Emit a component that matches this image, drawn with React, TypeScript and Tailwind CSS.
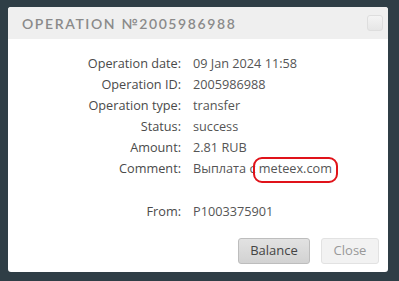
import React from 'react';

const rows = [
  { label: 'Operation date:', value: '09 Jan 2024 11:58' },
  { label: 'Operation ID:', value: '2005986988' },
  { label: 'Operation type:', value: 'transfer' },
  { label: 'Status:', value: 'success' },
  { label: 'Amount:', value: '2.81 RUB' },
];

export default function App() {
  return (
    <div className="w-[399px] h-[281px] bg-[#2f3e46] pt-[7px] pl-[8px] overflow-hidden" style={{ fontFamily: '"Open Sans", "DejaVu Sans", sans-serif' }}>
      <div className="w-[380px] h-[265px] bg-white rounded-[3px] flex flex-col overflow-hidden">
        <div className="h-[32px] bg-[#efefef] flex items-center justify-between pl-[14px] pr-[5px]">
          <span className="text-[14px] font-semibold tracking-[1.6px] text-[#8a8a8a]" style={{ fontFamily: 'Lato, "Open Sans", sans-serif' }}>
            OPERATION №2005986988
          </span>
          <div className="w-[16px] h-[16px] rounded-[3px] border border-[#dedede] bg-gradient-to-b from-[#f4f4f4] to-[#e6e6e6]" />
        </div>
        <div className="flex-1 pt-[15px] text-[12.7px] text-[#4a4a4a]">
          <div className="grid grid-cols-[173px_1fr] gap-x-[12px] gap-y-[3px] leading-[18px]">
            {rows.map((r) => (
              <React.Fragment key={r.label}>
                <div className="text-right">{r.label}</div>
                <div className="text-[#555]">{r.value}</div>
              </React.Fragment>
            ))}
            <div className="text-right">Comment:</div>
            <div className="text-[#555]">
              Выплата с{' '}
              <span className="relative">
                meteex.com
                <span className="absolute -left-[6px] -right-[6px] -top-[2px] -bottom-[6px] border-2 border-[#e0131a] rounded-[9px]" />
              </span>
            </div>
            <div className="h-[19px]" />
            <div />
            <div className="text-right">From:</div>
            <div className="text-[#555]">P1003375901</div>
          </div>
          <div className="flex justify-end gap-[11px] pr-[9px] mt-[18px]">
            <button className="w-[72px] h-[26px] rounded-[3px] border border-[#bdbdbd] bg-gradient-to-b from-[#e2e2e2] to-[#d2d2d2] text-[13px] text-[#444]">
              Balance
            </button>
            <button className="w-[58px] h-[26px] rounded-[3px] border border-[#e2e2e2] bg-[#f2f2f2] text-[13px] text-[#999]">
              Close
            </button>
          </div>
        </div>
      </div>
    </div>
  );
}
